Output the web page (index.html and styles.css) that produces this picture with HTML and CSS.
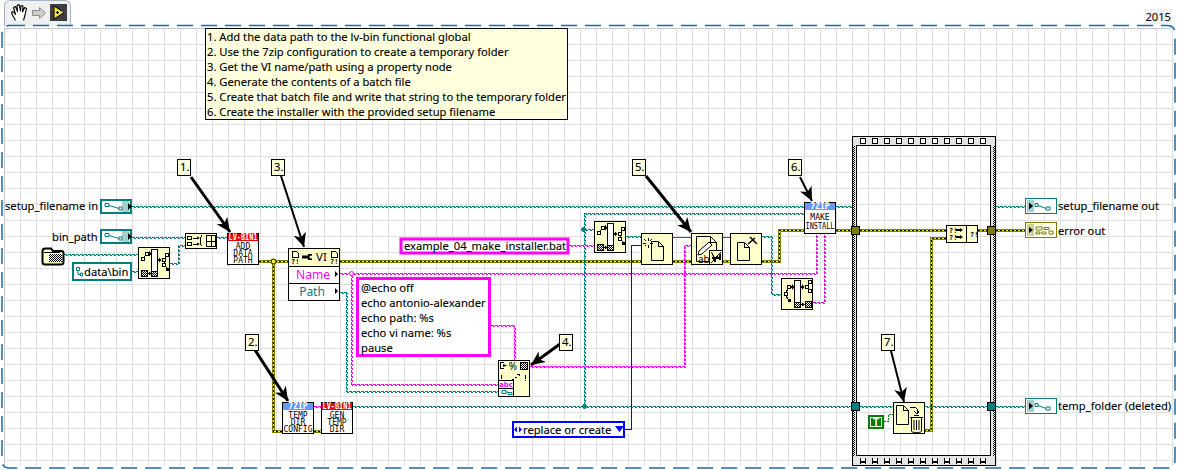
FILE: index.html
```html
<!DOCTYPE html>
<html lang="en">
<head>
<meta charset="utf-8">
<title>Make installer block diagram</title>
<link rel="stylesheet" href="styles.css">
</head>
<body>
<div class="vi">
  <header class="toolbar">
    <div class="tab">
      <svg class="tool" width="16" height="17" viewBox="0 0 16 17">
        <path class="hand" d="M4.500 16.500 1.500 11 .5 8.500 2 7.500 4.500 10.500 2.500 3.500 4.500 2.500 6.500 7.500 6 1.500 8 .5 9.500 7 10 1.500 12 2 11.500 8 13.500 3.500 15.500 4.500 14 11 12.500 16.500"/>
      </svg>
      <svg class="tool arrow-tool" width="14" height="12" viewBox="0 0 14 12">
        <path class="run" d="M.5 3.500H7.500V.5L13.500 6 7.500 11.500V8.500H.5Z"/>
      </svg>
      <svg class="tool" width="17" height="17" viewBox="0 0 17 17">
        <rect class="vi-film" width="17" height="17"/>
        <path class="vi-tri" d="M4 2 14 8.500 4 15Z"/>
        <path class="vi-red" d="M0 5.500H4M12 7.500H17"/>
        <path class="vi-blue" d="M0 11.500H4"/>
        <path class="vi-ink" d="M6 8.500H9M7.500 7V10"/>
      </svg>
    </div>
    <span class="year">2015</span>
  </header>
  <main class="diagram"></main>

  <svg class="canvas" viewBox="0 0 1178 470" width="1178" height="470">
    <defs>
      <pattern id="chk" width="2" height="2" patternUnits="userSpaceOnUse">
        <rect width="2" height="2" class="white"/>
        <rect width="1" height="1" class="black"/>
        <rect x="1" y="1" width="1" height="1" class="black"/>
      </pattern>
      <pattern id="holes" x="860" width="12" height="6" patternUnits="userSpaceOnUse">
        <rect x=".5" y=".5" width="5" height="5" class="hole"/>
      </pattern>
      <marker id="head" markerUnits="userSpaceOnUse" markerWidth="16" markerHeight="14" refX="14" refY="7" orient="auto">
        <path d="M0 .5 14 7 0 13.500 4 7Z" class="black"/>
      </marker>

      <g id="wires-teal">
        <path d="M132 206.500H852"/><path d="M996 206.500H1025"/>
        <path d="M132 237.500H185"/><path d="M64 254.500H138"/><path d="M132 271.500H138"/>
        <path d="M170 263.500H178.500V245.500H185"/><path d="M217 237.500H227"/>
        <path d="M340 292.500H346.500V391.500H498"/>
        <path d="M353 406.500H852"/>
        <path d="M584.500 213.500V406.500"/><path d="M584 213.500H804"/>
        <path d="M584 229.500H594"/><path d="M626 236.500H641"/>
        <path d="M762 236.500H771.500V294.500H781"/>
        <path d="M860 406.500H893"/><path d="M925 406.500H987"/><path d="M996 406.500H1025"/>
      </g>
      <g id="wires-pink">
        <path d="M340 273.500H816.500V233"/>
        <path d="M351.500 273.500V384.500H498"/>
        <path d="M491 325.500H514.500V360"/>
        <path d="M530 366.500H684.500V245.500H691"/>
        <path d="M569 245.500H594"/>
        <path d="M813 302.500H824.500V233"/>
        <path d="M314 406.500H321"/>
      </g>
      <g id="wires-err">
        <path d="M259 261.500H288"/><path d="M340 261.500H641"/><path d="M673 261.500H691"/>
        <path d="M722 261.500H730"/><path d="M762 261.500H779.500V230.500H804"/>
        <path d="M836 230.500H852"/><path d="M856 230.500H946"/><path d="M978 230.500H992"/><path d="M996 230.500H1025"/>
        <path d="M273.500 261.500V431.500H282"/><path d="M314 431.500H321"/>
        <path d="M946 238.500H931.500V430.500H925"/>
      </g>

      <g id="term">
        <rect x="1" y="1" width="30" height="13" class="term-body"/>
        <rect x="22" y="2" width="7" height="11" class="term-shade"/>
        <path class="black" d="M28 4 32 7.500 28 11Z"/>
        <path class="term-pic" d="M5 4.500H9V7.500H5ZM9 6.500 19 9.500M19 8H22V11H19Z"/>
      </g>
      <g id="ind">
        <rect x=".5" y=".5" width="31" height="15" class="term-body-thin"/>
        <rect x="2" y="2" width="7" height="12" class="term-shade"/>
        <path class="black" d="M4 4.500 8 8 4 11.500Z"/>
        <path class="term-pic" d="M10 5.500H13V8.500H10ZM13 7.500 21 10.500M21 9H25V12H21Z"/>
      </g>
      <g id="ind-err">
        <rect x=".5" y=".5" width="31" height="15" class="err-body"/>
        <rect x="2" y="2" width="7" height="12" class="err-shade"/>
        <path class="black" d="M4 5 8 8 4 11Z"/>
        <path class="err-pic" d="M11 5H17V8H11ZM19 5.500H24V7.500H19ZM11 10H15V12H11ZM17 10H21V12H17ZM24 9H28V12H24Z"/>
      </g>

      <g id="buildpath">
        <rect x=".5" y=".5" width="31" height="31" class="node"/>
        <rect x="13.500" y="2.500" width="6" height="27" class="white-box"/>
        <rect x="14" y="24" width="5" height="5" class="chk"/>
        <path class="thin" d="M13.500 24H19.500"/>
        <rect x="3.500" y="23.500" width="6" height="6" class="chk-box"/>
        <path class="icon-sq" d="M3.500 10.500H6.500V13.500H3.500ZM7.500 5.500H10.500V8.500H7.500ZM24.500 11.500H27.500V14.500H24.500ZM27.500 6.500H30.500V9.500H27.500ZM24.500 16.500H27.500V19.500H24.500Z"/>
        <path class="thin" d="M6 10 8 8.500M27 11 28 9.500M26 15V16M27 19 29 21"/>
        <path class="black" d="M28 21H31V24H28ZM10 6H11V3.500L13.500 7 11 9.500V8H10ZM20 12H21V10.500L23.500 13 21 15.500V14H20ZM10 26H11V24.500L13.500 26.500 11 28.500V27H10Z"/>
      </g>
      <g id="strippath">
        <rect x=".5" y=".5" width="31" height="31" class="node"/>
        <rect x="13.500" y="2.500" width="6" height="27" class="white-box"/>
        <rect x="14" y="24" width="5" height="5" class="chk"/>
        <path class="thin" d="M13.500 24H19.500"/>
        <rect x="24.500" y="23.500" width="6" height="6" class="chk-box"/>
        <path class="icon-sq" d="M6.500 7.500H9.500V10.500H6.500ZM3.500 14.500H6.500V17.500H3.500ZM24.500 7.500H27.500V10.500H24.500ZM27.500 2.500H30.500V5.500H27.500ZM27.500 11.500H30.500V14.500H27.500Z"/>
        <path class="thin" d="M7 11 5 14M5 18 7 21M27 7 28 6M27 11 28 12"/>
        <path class="black" d="M7 21H10V24H7ZM10 8H11V6L13.500 9 11 12V10H10ZM20 8H21V6L23.500 9 21 12V10H20ZM20 26H21V24.500L24 26.500 21 28.500V27H20Z"/>
      </g>
      <g id="page">
        <path class="page" d="M.5 .5H7.500L12.500 5.500V19.500H.5Z"/>
        <path class="thin" d="M7.500 .5V5.500H12.500"/>
      </g>

      <g id="hdr-red"><rect x=".5" y=".5" width="31" height="31" class="white-box"/><rect x="1" y="1" width="30" height="7" class="red"/></g>
      <g id="hdr-blue"><rect x=".5" y=".5" width="31" height="31" class="white-box"/><rect x="1" y="1" width="30" height="7" class="blue-head"/></g>
    </defs>

    <!-- canvas border -->
    <path class="dash" d="M9 25.500H1168Q1175 26 1175 33V460Q1175 468 1168 468H9Q2 468 2 460V33Q2 26 9 25.500"/>
    <path class="canvas-corner" d="M5 34 11 29H5Z"/>

    <!-- flat sequence frame -->
    <path class="frame" d="M852.500 136.500H995.500V465.500H852.500ZM856.500 145.500H990.500V455.500H856.500Z"/>
    <rect x="860" y="138" width="128" height="6" class="holes"/>
    <rect x="860" y="458" width="128" height="6" class="holes"/>
    <rect x="853" y="146" width="2" height="310" class="chk"/>
    <rect x="993" y="146" width="2" height="310" class="chk"/>

    <!-- wires -->
    <use href="#wires-err" class="we-out"/>
    <use href="#wires-err" class="we-in"/>
    <use href="#wires-err" class="we-dash"/>
    <use href="#wires-teal" class="w teal"/>
    <use href="#wires-teal" class="w teal alt"/>
    <use href="#wires-pink" class="w pink"/>
    <use href="#wires-pink" class="w pink alt"/>
    <path class="solid-teal" d="M673 237.500H691M722 237.500H730"/>
    <path class="solid-blue" d="M625 429.500H631.500V245.500H641"/>
    <path class="dot-green" d="M884 421.500H888.500V414.500H893"/>

    <circle cx="273.500" cy="261.500" r="2.500" class="jn-err"/>
    <circle cx="351.500" cy="273.500" r="2" class="jn-pink"/>
    <circle cx="584.500" cy="406.500" r="2" class="jn-teal"/>
    <circle cx="583.500" cy="229.500" r="2" class="jn-teal"/>

    <!-- free label text -->
    <text x="5" y="210" class="t">setup_filename in</text>
    <text x="52" y="241" class="t">bin_path</text>
    <text x="1058" y="210" class="t">setup_filename out</text>
    <text x="1058" y="235" class="t">error out</text>
    <text x="1058" y="410" class="t">temp_folder (deleted)</text>

    <!-- terminals -->
    <use href="#term" x="100" y="199"/>
    <use href="#term" x="100" y="229"/>
    <use href="#ind" x="1025" y="198"/>
    <use href="#ind-err" x="1025" y="222"/>
    <use href="#ind" x="1025" y="398"/>

    <!-- folder constant -->
    <g transform="translate(41 247)">
      <path class="folder" d="M1.500 4.500Q1.500 1.500 4 1.500H10L12 4H20Q22.500 4 22.500 6V15Q22.500 17.500 20 17.500H4Q1.500 17.500 1.500 15Z"/>
      <rect x="8" y="7" width="13" height="8" class="chk"/>
      <path class="thin" d="M3 5.500H19"/>
    </g>

    <!-- path constant -->
    <rect x="73" y="263" width="58" height="17" class="const-path"/>
    <path class="const-pic" d="M76.500 267.500H79.500V270.500H76.500ZM78 270.500V274.500H80M80.500 273H82.500V276H80.500Z"/>
    <text x="84" y="276" class="t">data\bin</text>

    <!-- string constants -->
    <rect x="401" y="239" width="167" height="14" class="const-str"/>
    <text x="404" y="250" class="t">example_04_make_installer.bat</text>

    <rect x="357.500" y="278.500" width="132" height="77" class="const-str"/>
    <text x="361" y="292" class="t">@echo off</text>
    <text x="361" y="307" class="t">echo antonio-alexander</text>
    <text x="361" y="322" class="t">echo path: %s</text>
    <text x="361" y="337" class="t">echo vi name: %s</text>
    <text x="361" y="352" class="t">pause</text>

    <!-- enum -->
    <rect x="513" y="422" width="111" height="15" class="const-enum"/>
    <path class="enum-ink" d="M514 429.500 517 426.500V432.500ZM522 429.500 519 426.500V432.500ZM615 426H624L619.500 432Z"/>
    <text x="523" y="434" class="t">replace or create</text>

    <!-- build array -->
    <g transform="translate(185 233)">
      <rect x=".5" y=".5" width="31" height="15" class="node"/>
      <path class="thin" d="M2.500 3.500H6.500V6.500H2.500ZM2.500 9.500H6.500V12.500H2.500ZM8 5H12M8 11H12M21.500 2.500H30.500V13.500H21.500ZM21.500 8H30.500M26 2.500V13.500M16.500 2.500Q14 8 16.500 13.500"/>
      <path class="black" d="M12 3.500 15 5 12 6.500ZM12 9.500 15 11 12 12.500Z"/>
    </g>

    <use href="#buildpath" x="138" y="247"/>
    <use href="#buildpath" x="594" y="221"/>
    <use href="#strippath" x="781" y="278"/>

    <!-- lv-bin nodes -->
    <g transform="translate(227 233)">
      <use href="#hdr-red"/>
      <text x="16" y="7" class="hd" textLength="29" lengthAdjust="spacingAndGlyphs">LV-BIN1</text>
      <text x="16" y="16" class="ic">ADD</text>
      <text x="16" y="23" class="ic">DATA</text>
      <text x="16" y="30" class="ic">PATH</text>
    </g>
    <g transform="translate(321 402)">
      <use href="#hdr-red"/>
      <text x="16" y="7" class="hd" textLength="29" lengthAdjust="spacingAndGlyphs">LV-BIN1</text>
      <text x="16" y="16" class="ic">GEN</text>
      <text x="16" y="23" class="ic">TEMP</text>
      <text x="16" y="30" class="ic">DIR</text>
    </g>
    <g transform="translate(282 402)">
      <use href="#hdr-blue"/>
      <text x="16" y="7" class="hd">7ZIP</text>
      <text x="16" y="16" class="ic">TEMP</text>
      <text x="16" y="23" class="ic">DIR</text>
      <text x="16" y="30" class="ic">CONFIG</text>
    </g>
    <g transform="translate(804 202)">
      <use href="#hdr-blue"/>
      <text x="16" y="7" class="hd">7ZIP</text>
      <text x="16" y="18" class="ic">MAKE</text>
      <text x="16" y="27" class="ic" textLength="29" lengthAdjust="spacingAndGlyphs">INSTALL</text>
    </g>

    <!-- property node -->
    <g transform="translate(288 248)">
      <rect x=".5" y=".5" width="51" height="52" class="white-box"/>
      <rect x="1" y="1" width="50" height="17" class="node-nb"/>
      <path class="thin" d="M.5 18.500H51.500M.5 35.500H51.500M4.500 3.500H8.500L10.500 5.500V9.500H4.500ZM43.500 3.500H47.500L49.500 5.500V9.500H43.500Z"/>
      <path class="black" d="M14 7.500H20V10.500H14ZM20 6H24V12H20ZM47 23 50 26 47 29ZM47 40 50 43 47 46Z"/>
      <circle cx="23" cy="9" r="1.500" class="pale-dot"/>
      <text x="28" y="13" class="pn-vi">VI</text>
      <text x="3" y="16" class="q">?!</text>
      <text x="42" y="16" class="q">?!</text>
      <text x="25" y="30.500" class="pn-name">Name</text>
      <text x="24" y="47.500" class="pn-path">Path</text>
    </g>

    <!-- file nodes -->
    <g transform="translate(641 233)">
      <rect x=".5" y=".5" width="31" height="31" class="node"/>
      <use href="#page" x="10" y="8"/>
      <path class="thin" d="M7 5V8M7 12V15M2 10H5M9 10H12M3.500 6.500 5 8M10.500 6.500 9 8M3.500 13.500 5 12"/>
    </g>
    <g transform="translate(691 233)">
      <rect x=".5" y=".5" width="31" height="31" class="node"/>
      <path class="page" d="M5.500 3.500H19.500L25.500 9.500V28.500H5.500Z"/>
      <path class="thin" d="M19.500 3.500V9.500H25.500"/>
      <path class="pencil" d="M8 18 18 9 21 12 11 21 7 22Z"/>
      <text x="7" y="30" class="ab">ab</text>
      <rect x="18.500" y="17.500" width="13" height="14" class="node-w"/>
      <path class="black" d="M20 19H21L24 25H22.500ZM30 20V27H28V22ZM21 24H28V26H25V29H23V26H21Z"/>
      <path class="thin" d="M20 30 30 19"/>
    </g>
    <g transform="translate(730 233)">
      <rect x=".5" y=".5" width="31" height="31" class="node"/>
      <path class="page" d="M7.500 9.500H14.500L19.500 14.500V27.500H7.500Z"/>
      <path class="thin" d="M14.500 9.500V14.500H19.500"/>
      <path class="x" d="M18 11 25 5M20 4 27 11"/>
    </g>
    <g transform="translate(893 402)">
      <rect x=".5" y=".5" width="31" height="31" class="node"/>
      <use href="#page" x="3" y="3"/>
      <path class="thin" d="M17 5H22L24 7V11M21 9 24 12 26 9"/>
      <path class="can" d="M18.500 15.500H28.500V29C28.500 30 27 30.500 23.500 30.500 20 30.500 18.500 30 18.500 29ZM17 15.500H30M21 13.500H26M21 18V28M23.500 18V28M26 18V28"/>
    </g>

    <!-- format into string -->
    <g transform="translate(498 360)">
      <rect x=".5" y=".5" width="31" height="36" class="node"/>
      <path class="black" d="M2 2H3V9H2ZM3 2H6V3H3ZM3 8H6V9H3ZM5 4 9 5.500 5 7ZM3 15V19H4V15ZM3 20V21H4V20ZM27 15V19H28V15ZM27 20V21H28V20Z"/>
      <text x="15" y="10" class="pct">%</text>
      <rect x="22.500" y="2.500" width="7" height="7" class="chk-box"/>
      <path class="thin" d="M14 19H16M17 17H19M19 14 21 14 21 16"/>
      <path class="white-cell" d="M.5 20.500H15.500V36.500H.5Z"/>
      <path class="thin" d="M.5 28.500H15.500"/>
      <text x="8" y="27" class="abc">abc</text>
      <path class="term-pic" d="M4 30.500H8V33.500H4ZM8 32H10M10 32.500H14V34.500H10Z"/>
    </g>

    <!-- merge errors -->
    <g transform="translate(946 225)">
      <rect x=".5" y=".5" width="31" height="17" class="node"/>
      <path class="thin" d="M20.500 .5V17.500"/>
      <text x="3" y="8" class="q">?!</text>
      <text x="3" y="15" class="q">?!</text>
      <text x="24" y="12" class="q">?!</text>
      <path class="black" d="M10 4H14V3L17 5 14 7V6H10ZM10 11H14V10L17 12 14 14V13H10Z"/>
    </g>

    <!-- tunnels -->
    <rect x="851.500" y="226.500" width="8" height="8" class="tun-err"/>
    <rect x="987.500" y="226.500" width="8" height="8" class="tun-err"/>
    <rect x="851.500" y="402.500" width="8" height="8" class="tun-teal"/>
    <rect x="987.500" y="402.500" width="8" height="8" class="tun-teal"/>

    <!-- true constant -->
    <rect x="868" y="415" width="16" height="14" class="bool"/>
    <rect x="870.500" y="417.500" width="11" height="9" class="bool-in"/>
    <text x="876" y="426" class="bool-t">T</text>

    <!-- arrows -->
    <path class="arrow a3" d="M191 177 230 232"/>
    <path class="arrow a2" d="M281 176 304 247"/>
    <path class="arrow a3" d="M646 176 691 232"/>
    <path class="arrow a2" d="M800 177 812 201"/>
    <path class="arrow a3" d="M255 350 288 401"/>
    <path class="arrow a3" d="M560 344 531 365"/>
    <path class="arrow a2" d="M891 351 904 402"/>

    <!-- labels -->
    <g transform="translate(177 159)"><rect x=".5" y=".5" width="13" height="16" class="note"/><text x="3" y="12" class="t">1.</text></g>
    <g transform="translate(271 159)"><rect x=".5" y=".5" width="13" height="16" class="note"/><text x="3" y="12" class="t">3.</text></g>
    <g transform="translate(632 159)"><rect x=".5" y=".5" width="13" height="16" class="note"/><text x="3" y="12" class="t">5.</text></g>
    <g transform="translate(788 159)"><rect x=".5" y=".5" width="13" height="16" class="note"/><text x="3" y="12" class="t">6.</text></g>
    <g transform="translate(245 334)"><rect x=".5" y=".5" width="13" height="16" class="note"/><text x="3" y="12" class="t">2.</text></g>
    <g transform="translate(559 334)"><rect x=".5" y=".5" width="13" height="16" class="note"/><text x="3" y="12" class="t">4.</text></g>
    <g transform="translate(881 334)"><rect x=".5" y=".5" width="13" height="16" class="note"/><text x="3" y="12" class="t">7.</text></g>

    <g transform="translate(205 28)">
      <rect x=".5" y=".5" width="362" height="91" class="note"/>
      <text x="2" y="13" class="t">1. Add the data path to the lv-bin functional global</text>
      <text x="2" y="28" class="t">2. Use the 7zip configuration to create a temporary folder</text>
      <text x="2" y="43" class="t">3. Get the VI name/path using a property node</text>
      <text x="2" y="58" class="t">4. Generate the contents of a batch file</text>
      <text x="2" y="73" class="t">5. Create that batch file and write that string to the temporary folder</text>
      <text x="2" y="88" class="t">6. Create the installer with the provided setup filename</text>
    </g>
  </svg>
</div>
</body>
</html>
```

FILE: styles.css
```css
* { box-sizing: border-box; }
html, body { margin: 0; padding: 0; background: #fff; }

.vi {
  position: relative;
  width: 1178px;
  height: 470px;
  display: flex;
  flex-direction: column;
  overflow: hidden;
}

.toolbar {
  display: flex;
  justify-content: space-between;
  align-items: flex-end;
  height: 26px;
  padding: 0 6px 0 4px;
}
.tab {
  width: 67px;
  height: 26px;
  display: flex;
  align-items: center;
  padding: 0 0 2px 6px;
  gap: 4px;
  background: #f0f0f0;
  border: 1px solid #a6b4c6;
  border-bottom: 0;
  border-radius: 6px 6px 0 0;
}
.tool { display: block; flex: none; }
.arrow-tool { margin-left: 1px; }
.hand { fill: #fff; stroke: #000; stroke-width: 1.1; stroke-linejoin: round; }
.run { fill: #cfcfcf; stroke: #8a8a8a; }
.vi-film { fill: #3d3d3d; }
.vi-tri { fill: #f4e23c; stroke: #000; }
.vi-red { stroke: #e01010; fill: none; }
.vi-blue { stroke: #1030e0; fill: none; }
.vi-ink { stroke: #000; fill: none; }

.year {
  font: 11.2px "Noto Sans", sans-serif;
  background: #f0f0f0;
  color: #000;
  height: 15px;
  line-height: 15px;
  padding: 0 1px;
  margin-bottom: 2px;
}

.diagram {
  flex: 1;
  margin: 2px 4px 4px 4px;
  border-top: 1px solid #c8c8c8;
  border-left: 1px solid #c8c8c8;
  background-color: #fff;
  background-image:
    linear-gradient(to right, #e0e0e0 1px, transparent 1px),
    linear-gradient(to bottom, #e0e0e0 1px, transparent 1px);
  background-size: 16px 16px;
  background-position: -1px -1px;
}

.canvas { position: absolute; left: 0; top: 0; display: block; }

/* fills */
.white { fill: #fff; }
.black { fill: #000; }
.hole { fill: #fff; stroke: #000; }
.holes { fill: url(#holes); }
.chk { fill: url(#chk); }
.chk-box { fill: url(#chk); stroke: #000; shape-rendering: crispEdges; }
.icon-sq { fill: #ffffcc; stroke: #000; shape-rendering: crispEdges; }

.dash { fill: none; stroke: #1d6aa5; stroke-width: 1.5; stroke-dasharray: 16 8; }
.canvas-corner { fill: #f0f0f0; }
.frame { fill: #e4e4e4; fill-rule: evenodd; stroke: #000; shape-rendering: crispEdges; }

/* wires */
.w { fill: none; stroke-width: 1; stroke-dasharray: 3 1; shape-rendering: crispEdges; }
.w.alt { stroke-dasharray: 2 2; stroke-dashoffset: -1; transform: translate(1px, 1px); }
.teal { stroke: #007f7f; }
.pink { stroke: #ff00ff; }
.we-out, .we-in, .we-dash { fill: none; shape-rendering: crispEdges; }
.we-out { stroke: #7d7d00; stroke-width: 3; }
.we-in { stroke: #ffff00; stroke-width: 1; }
.we-dash { stroke: #000; stroke-width: 1; stroke-dasharray: 2 2; }
.solid-teal { fill: none; stroke: #007f7f; shape-rendering: crispEdges; }
.solid-blue { fill: none; stroke: #0000ff; shape-rendering: crispEdges; }
.dot-green { fill: none; stroke: #008000; stroke-dasharray: 2 1; shape-rendering: crispEdges; }
.jn-err { fill: #ffff00; stroke: #000; }
.jn-pink { fill: #fff; stroke: #ff00ff; }
.jn-teal { fill: #007f7f; stroke: #007f7f; }

/* text */
text { font-family: "Noto Sans", "DejaVu Sans", sans-serif; }
.t { font-size: 11.2px; fill: #000; stroke: #000; stroke-width: .12px; }
.hd {
  font: bold 8px "DejaVu Sans Mono", monospace;
  fill: #fff;
  text-anchor: middle;
}
.ic {
  font: 8px "DejaVu Sans Mono", monospace;
  fill: #000;
  text-anchor: middle;
}
.q { font: bold 7px "DejaVu Sans Mono", monospace; fill: #000; }
.pn-vi { font-size: 11.5px; fill: #000; }
.pn-name { font-size: 12px; fill: #ff00ff; text-anchor: middle; }
.pn-path { font-size: 12px; fill: #007f7f; text-anchor: middle; }
.ab { font-size: 10px; fill: #000; }
.pct { font-size: 10px; fill: #000; text-anchor: middle; }
.abc { font: bold 7px "DejaVu Sans", sans-serif; fill: #ff00ff; text-anchor: middle; }
.bool-t { font: bold 10px "Liberation Sans", sans-serif; fill: #fff; text-anchor: middle; }

/* terminals */
.term-body { fill: #fff; stroke: #007f7f; stroke-width: 2; }
.term-body-thin { fill: #fff; stroke: #007f7f; shape-rendering: crispEdges; }
.term-shade { fill: #a3cfcf; }
.term-pic { fill: #fff; stroke: #007f7f; }
.err-body { fill: #fffff0; stroke: #7d7d00; shape-rendering: crispEdges; }
.err-shade { fill: #cfcf96; }
.err-pic { fill: #fff; stroke: #7d7d00; }

.const-path { fill: #fff; stroke: #007f7f; stroke-width: 2; }
.const-pic { fill: #fff; stroke: #007f7f; }
.const-str { fill: #fff; stroke: #ff00ff; stroke-width: 3; }
.const-enum { fill: #fff; stroke: #0000ff; stroke-width: 2; }
.enum-ink { fill: #0000ff; }

.folder { fill: #ffffcc; stroke: #000; stroke-width: 2; }

/* nodes */
.node { fill: #ffffcc; stroke: #000; shape-rendering: crispEdges; }
.node-nb { fill: #ffffcc; }
.node-w { fill: #ffffcc; stroke: #000; shape-rendering: crispEdges; }
.note { fill: #ffffdd; stroke: #000; shape-rendering: crispEdges; }
.white-box { fill: #fff; stroke: #000; shape-rendering: crispEdges; }
.white-cell { fill: #fff; stroke: #000; shape-rendering: crispEdges; }
.red { fill: #e8000d; }
.blue-head { fill: #6699ff; }
.thin { fill: none; stroke: #000; shape-rendering: crispEdges; }
.page { fill: #ffffcc; stroke: #000; }
.pencil { fill: #fff; stroke: #000; }
.x { fill: none; stroke: #000; stroke-width: 1.5; }
.can { fill: #ffffcc; stroke: #000; }
.pale-dot { fill: #ffffcc; }

.tun-err { fill: #7d7d00; stroke: #000; shape-rendering: crispEdges; }
.tun-teal { fill: #007f7f; stroke: #000; shape-rendering: crispEdges; }
.bool { fill: #008000; }
.bool-in { fill: none; stroke: #fff; shape-rendering: crispEdges; }

.arrow { fill: none; stroke: #000; marker-end: url(#head); }
.a3 { stroke-width: 3; }
.a2 { stroke-width: 2; }
```
